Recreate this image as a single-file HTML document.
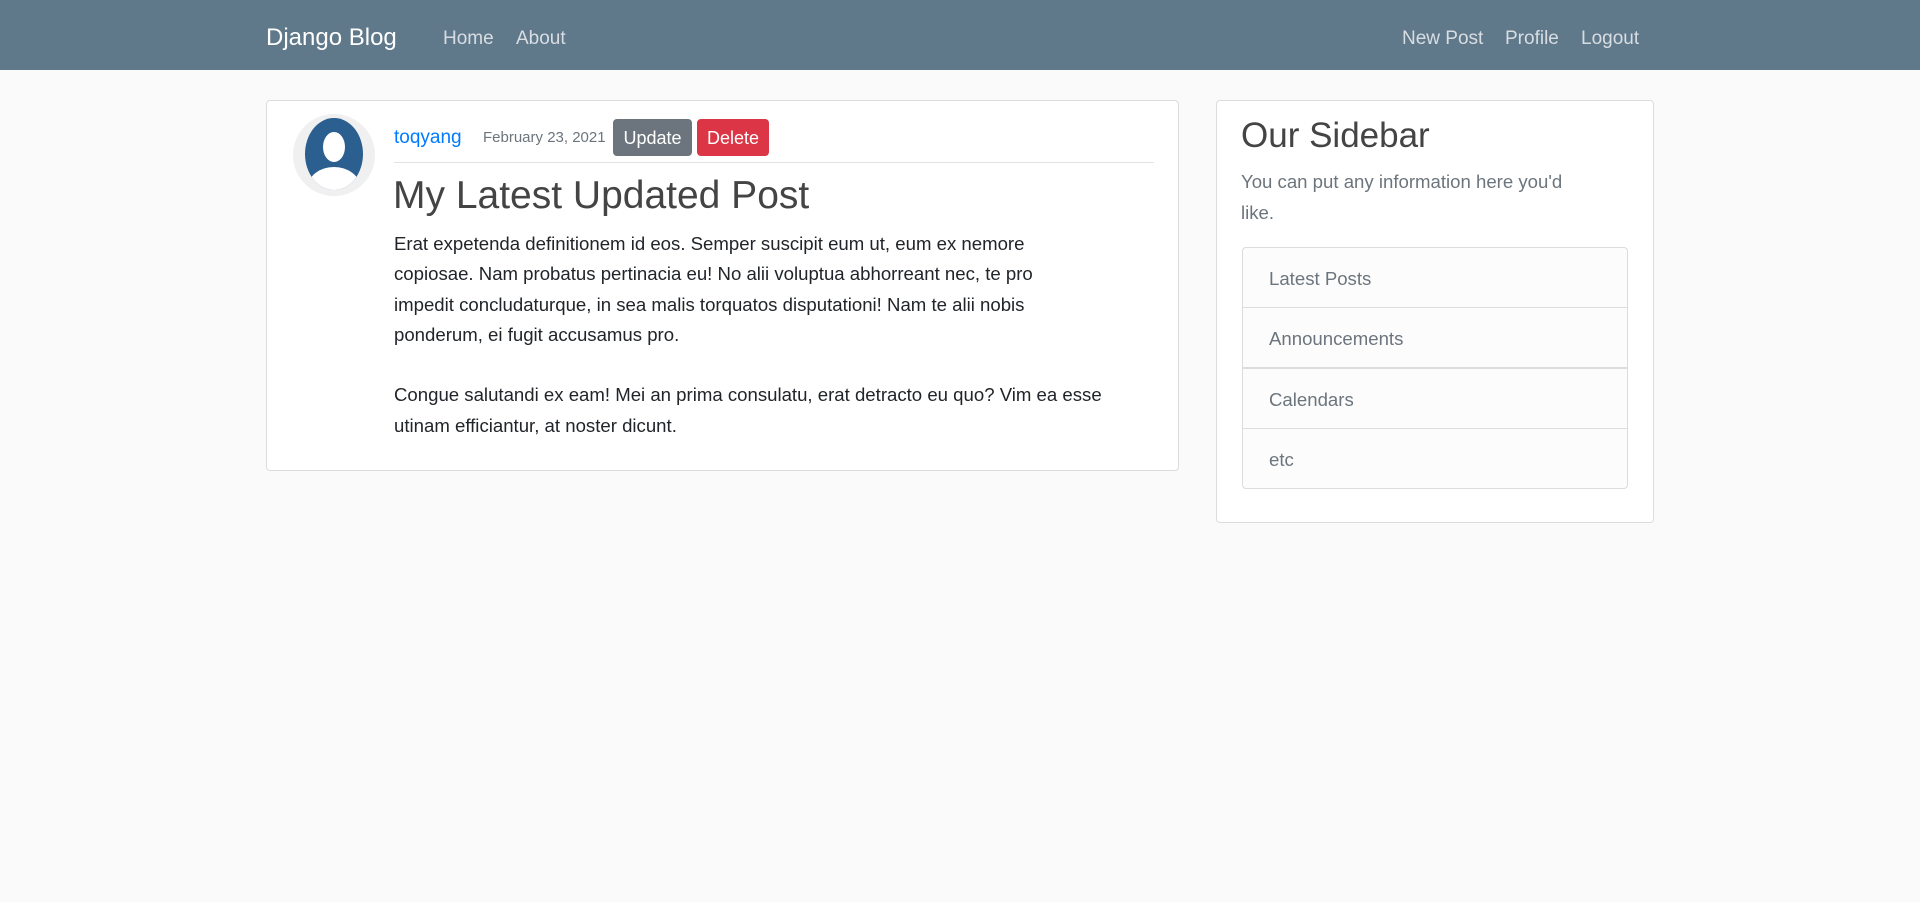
<!DOCTYPE html>
<html><head><style>
*{box-sizing:border-box;margin:0;padding:0}
body{width:1920px;height:902px;background:#fafafa;font-family:"Liberation Sans",sans-serif;color:#212529;position:relative;overflow:hidden}
.nav{position:absolute;left:0;top:0;width:1920px;height:70px;background:#5f788a}
.nav span{position:absolute;top:26px;font-size:19px;color:rgba(255,255,255,.75);line-height:26px}
.nav .brand{font-size:24px;color:#fff;top:23px;line-height:30px}
.card{position:absolute;background:#fff;border:1px solid #dcdcdc;border-radius:4px}
.av{position:absolute;left:293px;top:114px;width:82px;height:82px;border-radius:50%;background:#f0f0f0}
.abs{position:absolute;white-space:nowrap}
.btn{position:absolute;top:119px;height:37px;border-radius:4px;color:#fff;font-size:18px;line-height:39px;text-align:center}
p.body{position:absolute;left:394px;top:229px;width:800px;white-space:nowrap;font-size:18.6px;line-height:30.3px;color:#212529}
.li{position:absolute;left:1242px;width:386px;height:61px;border:1px solid #dcdcdc;background:#fcfcfc;font-size:18.6px;color:#6c757d;line-height:61px;padding-left:26px}
</style></head><body>
<div class="nav">
<span class="brand" style="left:266px">Django Blog</span>
<span style="left:443px">Home</span>
<span style="left:516px">About</span>
<span style="left:1402px">New Post</span>
<span style="left:1505px">Profile</span>
<span style="left:1581px">Logout</span>
</div>
<div class="card" style="left:266px;top:100px;width:913px;height:371px"></div>
<div class="av"></div>
<svg class="abs" style="left:304px;top:117px" width="60" height="76" viewBox="0 0 60 76">
<defs><clipPath id="c"><ellipse cx="30" cy="37" rx="29" ry="36"/></clipPath></defs>
<ellipse cx="30" cy="37" rx="29" ry="36" fill="#2a5f8f"/>
<g clip-path="url(#c)" fill="#fff"><ellipse cx="30" cy="30" rx="11" ry="15"/><ellipse cx="30" cy="70" rx="26" ry="20"/></g>
</svg>
<div class="abs" style="left:394px;top:127px;font-size:19px;color:#007bff">toqyang</div>
<div class="abs" style="left:483px;top:129px;font-size:15px;color:#6c757d">February 23, 2021</div>
<div class="btn" style="left:613px;width:79px;background:#6c757d">Update</div>
<div class="btn" style="left:697px;width:72px;background:#dc3545">Delete</div>
<div class="abs" style="left:394px;top:162px;width:760px;height:1px;background:#e2e2e2"></div>
<div class="abs" style="left:393px;top:174px;font-size:39px;color:#444">My Latest Updated Post</div>
<p class="body">Erat expetenda definitionem id eos. Semper suscipit eum ut, eum ex nemore<br>copiosae. Nam probatus pertinacia eu! No alii voluptua abhorreant nec, te pro<br>impedit concludaturque, in sea malis torquatos disputationi! Nam te alii nobis<br>ponderum, ei fugit accusamus pro.<br><br>Congue salutandi ex eam! Mei an prima consulatu, erat detracto eu quo? Vim ea esse<br>utinam efficiantur, at noster dicunt.</p>
<div class="card" style="left:1216px;top:100px;width:438px;height:423px"></div>
<div class="abs" style="left:1241px;top:116px;font-size:35px;color:#444">Our Sidebar</div>
<div class="abs" style="left:1241px;top:166px;font-size:18.6px;line-height:31px;color:#6c757d">You can put any information here you'd<br>like.</div>
<div class="li" style="top:247px;border-radius:4px 4px 0 0">Latest Posts</div>
<div class="li" style="top:307px">Announcements</div>
<div class="li" style="top:368px">Calendars</div>
<div class="li" style="top:428px;border-radius:0 0 4px 4px">etc</div>
</body></html>
